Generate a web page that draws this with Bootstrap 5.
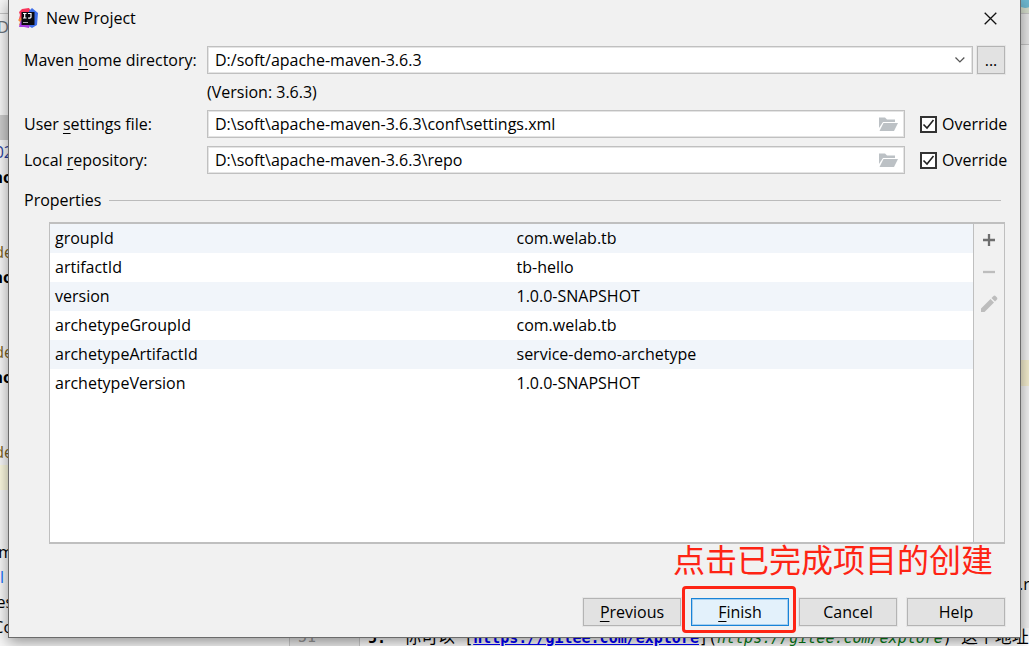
<!DOCTYPE html>
<html lang="en">
<head>
<meta charset="utf-8">
<meta name="viewport" content="width=device-width, initial-scale=1">
<title>New Project</title>
<link href="https://cdn.jsdelivr.net/npm/bootstrap@5.3.0/dist/css/bootstrap.min.css" rel="stylesheet">
<style>
  :root { --ui: "Open Sans", "Noto Sans", "Noto Sans CJK SC", sans-serif; --line: #c0c0c0; }
  body { font: 16px/20px var(--ui); color: #000; background: #fff; }

  /* editor window behind the dialog */
  .ide-bar { height: 14px; background: linear-gradient(90deg, #f5f5f5 50%, #d4dccb 50%); border-bottom: 1px solid #c4c4c4; }
  .ide-dot { right: -6px; top: -12px; width: 20px; height: 20px; background: #6db7cf; }
  .tree-pane { width: 13px; padding-top: 1px; line-height: 25px; background: #f8f8f8; }
  .tree-pane div { height: 25px; flex: none; }
  .tree-pane .picked { background: #cdcdcd; }
  .caret-line { background: #fcfae0; }
  .olive { color: #7d6423; }
  .navy { color: #2a3f9d; }
  .tool-tab { height: 31px; background: #e8e8e8; border-bottom: 1px solid #c4c4c4; }
  .side-pane { width: 10px; background: #f4f4f4; }
  .side-pane .stripe { height: 26px; margin-top: 315px; background: #f5efcf; }
  .side-pane .file-end { margin-top: 188px; }
  .code-pane { min-width: 0; }
  .code-line { font: 15px/18px "DejaVu Sans Mono", "Noto Sans CJK SC", monospace; white-space: pre; height: 18px; }
  .code-space { width: 276px; background: #f8f8f8; }
  .code-gutter { width: 71px; background: #eee; border-left: 1px solid #ccc; border-right: 1px solid #ccc; color: #999; padding-left: 8px; }
  .han { font-size: 17px; }
  .code-line a { color: #00f; font-weight: 700; }
  .md-target { color: #067d17; font-style: italic; }

  /* dialog */
  .wizard { inset: 0 8px 8px 8px; background: #f1f1f1; border: 1px solid #6b6b6b; border-top: 0; box-shadow: 0 4px 14px rgba(0,0,0,.42); padding: 0 15px 11px 15px; }
  .title-row { height: 36px; margin-left: -6px; margin-bottom: 10px; }
  .btn-bare { border: 0; background: none; padding: 0; display: flex; align-items: center; justify-content: center; }
  .form-line { height: 28px; }
  .label-col { width: 183px; flex: none; }
  u { text-underline-offset: 3px; }
  .path-box { height: 28px; background: #fff; border: 1px solid var(--line); box-shadow: inset 0 0 0 1px #e4e4e4; padding: 0 6px 0 7px; }
  .path-box input, .path-box select { border: 0; outline: 0; background: transparent; padding: 0; width: 100%; color: #000; appearance: none; height: 24px; }
  .btn-flat { --bs-btn-font-size: 16px; --bs-btn-line-height: 20px; --bs-btn-padding-x: 0; --bs-btn-padding-y: 0; --bs-btn-border-radius: 0; --bs-btn-color: #000; --bs-btn-bg: #e2e2e2; --bs-btn-border-color: #b4b4b4; --bs-btn-hover-bg: #e5f1fb; --bs-btn-hover-color: #000; height: 28px; width: 98px; box-shadow: 0 0 0 1px #e6e6e6; }
  .btn-dots { width: 28px; }
  .btn-default { --bs-btn-bg: #e3f1fb; --bs-btn-border-color: #1883d7; box-shadow: inset 0 0 0 1px #a5cff0; }
  .override { width: 100px; padding-left: 15px; gap: 5px; white-space: nowrap; }
  .override input { appearance: none; width: 17px; height: 17px; flex: none; margin: 0; border: 2px solid #333; background: #fff; }
  .override input:checked { background: #fff url("data:image/svg+xml,%3Csvg xmlns='http://www.w3.org/2000/svg' viewBox='0 0 13 13'%3E%3Cpath d='M1.5 6.5 5 10l6.5-8' fill='none' stroke='%23222' stroke-width='1.6'/%3E%3C/svg%3E") center/13px no-repeat; }
  .props-head hr { flex: 1; margin: 0 4px 0 8px; border-color: #bbb; opacity: 1; }
  .props-box { margin-left: 25px; border: 1px solid #bfbfbf; border-width: 2px 1px; background: #fff; }
  .props-table { table-layout: fixed; --bs-table-striped-bg: #f1f5fa; --bs-table-striped-color: #000; --bs-table-color: #000; }
  .props-table > tbody > tr > td { padding: 4px 5px; line-height: 21px; border: 0; }
  .props-tools { width: 31px; background: #f1f1f1; border-left: 1px solid #bfbfbf; }
  .props-tools button { height: 32px; width: 30px; }
  .hint { font: 32px/28px "Noto Sans CJK SC", sans-serif; color: #fe2414; margin-right: 12px; }
  .footer-row { gap: 10px; margin-top: 26px; }
  .ring { inset: -12px -7px -7px -9px; border: 3px solid #fe2414; border-radius: 4px; pointer-events: none; }
</style>
</head>
<body class="vh-100 overflow-hidden position-relative">

<div class="h-100 d-flex flex-column overflow-hidden" aria-hidden="true">
  <div class="ide-bar position-relative flex-shrink-0 overflow-hidden"><span class="ide-dot position-absolute rounded-circle"></span></div>
  <div class="flex-grow-1 d-flex overflow-hidden">
    <div class="tree-pane d-flex flex-column flex-shrink-0 overflow-hidden">
      <div class="d-flex justify-content-end text-secondary">D:</div><div></div><div></div><div></div>
      <div class="picked"></div>
      <div class="d-flex justify-content-end navy">02</div>
      <div class="d-flex justify-content-end fw-bold">no</div>
      <div></div><div></div>
      <div class="d-flex justify-content-end olive">de</div>
      <div class="d-flex justify-content-end fw-bold">no</div>
      <div></div><div></div>
      <div class="d-flex justify-content-end olive">de</div>
      <div class="d-flex justify-content-end fw-bold">no</div>
      <div></div><div></div>
      <div class="d-flex justify-content-end olive">de</div>
      <div class="caret-line"></div>
      <div></div><div></div>
      <div class="d-flex justify-content-end">m</div>
      <div class="d-flex text-primary">l</div>
      <div class="d-flex justify-content-end">es</div>
      <div class="d-flex justify-content-end">Co</div>
    </div>
    <div class="code-pane flex-grow-1 d-flex flex-column">
      <div class="side-pane flex-grow-1 align-self-end overflow-hidden">
        <div class="tool-tab"></div>
        <div class="stripe"></div>
        <div class="file-end">.r</div>
      </div>
      <div class="code-line d-flex flex-shrink-0 overflow-hidden">
        <div class="code-space flex-shrink-0"></div>
        <div class="code-gutter flex-shrink-0">51</div>
        <div class="ps-2"><b>5.</b>  <span class="han">你可以</span> [<a href="#">https://gitee.com/explore</a>](<span class="md-target">https://gitee.com/explore</span>) <span class="han">这个地址</span></div>
      </div>
    </div>
  </div>
</div>

<main class="wizard position-absolute d-flex flex-column" role="dialog" aria-label="New Project">
  <header class="title-row d-flex align-items-center flex-shrink-0">
    <svg width="20" height="20" viewBox="0 0 20 20" aria-hidden="true">
      <path d="M1 4 4 1 11 0 14 5 6 12 1 11 2 7z" fill="#f8355b"/>
      <path d="M0 12 3 9l2 6-1 4-3-2 1-3z" fill="#f48a3c"/>
      <path d="M11 3 14 0l6 5-1 12-5 3-5-3z" fill="#3f6fe8"/>
      <path d="M1 19 3 12l9 4-1 4-5-1z" fill="#a63ee0"/>
      <rect x="3.500" y="4" width="13" height="13" fill="#0a0a0f"/>
      <path d="M5 5.500h3.500M6.700 5.500v4.500M5 10h3.500M10 5.500h3v3.500q0 1.300-3 1" fill="none" stroke="#fff" stroke-width="1.200"/>
      <path d="M5 14.500h5" stroke="#aaa"/>
    </svg>
    <span class="ms-2">New Project</span>
    <button class="btn-bare ms-auto me-2" aria-label="Close">
      <svg width="13" height="13" viewBox="0 0 13 13"><path d="M.7.7l11.600 11.600M12.300.7.7 12.300" stroke="#111" stroke-width="1.300"/></svg>
    </button>
  </header>

  <div class="form-line d-flex align-items-center flex-shrink-0">
    <label class="label-col" for="home">Maven <u>h</u>ome directory:</label>
    <div class="path-box d-flex align-items-center flex-grow-1">
      <select id="home"><option>D:/soft/apache-maven-3.6.3</option></select>
      <svg width="12" height="8" viewBox="0 0 12 8" aria-hidden="true"><path d="M1.500 1.500 6 6l4.500-4.500" fill="none" stroke="#555" stroke-width="1.300"/></svg>
    </div>
    <button class="btn btn-flat btn-dots ms-1">...</button>
  </div>
  <div class="d-flex flex-shrink-0 my-2"><span class="label-col"></span><span>(Version: 3.6.3)</span></div>

  <div class="form-line d-flex align-items-center flex-shrink-0">
    <label class="label-col" for="settings">User <u>s</u>ettings file:</label>
    <div class="path-box d-flex align-items-center flex-grow-1">
      <input id="settings" type="text" value="D:\soft\apache-maven-3.6.3\conf\settings.xml">
      <button class="btn-bare" aria-label="Browse"><svg width="20" height="16" viewBox="0 0 20 16"><path d="M1 1.500h6l2 2h8v2.500H5L1 12zM5.500 7H20L16 15H1.500z" fill="#bcc1c5"/></svg></button>
    </div>
    <label class="override d-flex align-items-center"><input type="checkbox" checked>Override</label>
  </div>
  <div class="form-line d-flex align-items-center mt-2 flex-shrink-0">
    <label class="label-col" for="repo">Local <u>r</u>epository:</label>
    <div class="path-box d-flex align-items-center flex-grow-1">
      <input id="repo" type="text" value="D:\soft\apache-maven-3.6.3\repo">
      <button class="btn-bare" aria-label="Browse"><svg width="20" height="16" viewBox="0 0 20 16"><path d="M1 1.500h6l2 2h8v2.500H5L1 12zM5.500 7H20L16 15H1.500z" fill="#bcc1c5"/></svg></button>
    </div>
    <label class="override d-flex align-items-center"><input type="checkbox" checked>Override</label>
  </div>

  <div class="props-head d-flex align-items-center mt-3 mb-2 pb-1 flex-shrink-0"><span>Properties</span><hr></div>

  <section class="props-box d-flex flex-grow-1 align-items-stretch">
    <div class="flex-grow-1">
      <table class="table table-striped props-table mb-0">
        <tbody>
          <tr><td>groupId</td><td>com.welab.tb</td></tr>
          <tr><td>artifactId</td><td>tb-hello</td></tr>
          <tr><td>version</td><td>1.0.0-SNAPSHOT</td></tr>
          <tr><td>archetypeGroupId</td><td>com.welab.tb</td></tr>
          <tr><td>archetypeArtifactId</td><td>service-demo-archetype</td></tr>
          <tr><td>archetypeVersion</td><td>1.0.0-SNAPSHOT</td></tr>
        </tbody>
      </table>
    </div>
    <div class="props-tools d-flex flex-column flex-shrink-0">
      <button class="btn-bare" aria-label="Add"><svg width="14" height="14" viewBox="0 0 14 14"><path d="M7 1v12M1 7h12" stroke="#6e6e6e" stroke-width="2.300"/></svg></button>
      <button class="btn-bare" aria-label="Remove"><svg width="14" height="14" viewBox="0 0 14 14"><path d="M1 7h12" stroke="#bdbdbd" stroke-width="2.300"/></svg></button>
      <button class="btn-bare" aria-label="Edit"><svg width="18" height="18" viewBox="0 0 18 18"><path d="M1 13.500 10.500 4l3.500 3.500L4.500 17H1zM11.500 3l2-2q1-.8 2 0L17 2.500q.8 1 0 2l-2 2z" fill="#bdbdbd"/></svg></button>
    </div>
  </section>

  <div class="hint text-end flex-shrink-0">点击已完成项目的创建</div>

  <footer class="footer-row d-flex justify-content-end flex-shrink-0">
    <button class="btn btn-flat"><u>P</u>revious</button>
    <div class="position-relative d-flex">
      <button class="btn btn-flat btn-default"><u>F</u>inish</button>
      <span class="ring position-absolute"></span>
    </div>
    <button class="btn btn-flat">Cancel</button>
    <button class="btn btn-flat">Help</button>
  </footer>
</main>

<script src="https://cdn.jsdelivr.net/npm/bootstrap@5.3.0/dist/js/bootstrap.bundle.min.js"></script>
</body>
</html>
